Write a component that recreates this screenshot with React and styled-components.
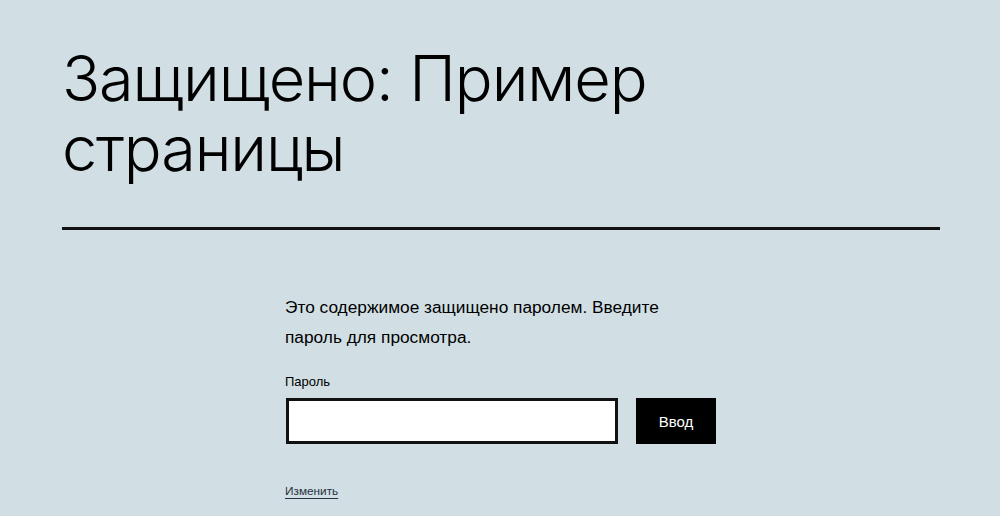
import React from "react";
import styled, { createGlobalStyle } from "styled-components";

const Global = createGlobalStyle`
  html, body { margin: 0; padding: 0; background: #d1dfe4; }
  body { font-family: "Liberation Sans", Arial, sans-serif; color: #000; }
`;

const Page = styled.div`
  width: 1000px;
  height: 516px;
  overflow: hidden;
  background: #d1dfe4;
`;

const Header = styled.header`
  margin: 0 60px 0 62px;
  padding: 43px 0 44px;
  border-bottom: 3px solid #111;
`;

const Title = styled.h1`
  margin: 0;
  font-family: Inter, "Liberation Sans", sans-serif;
  font-weight: 300;
  font-size: 63px;
  line-height: 70px;
  letter-spacing: -1.1px;
  max-width: 700px;
`;

const Content = styled.main`
  width: 430px;
  margin: 63px auto 0 285px;
`;

const Text = styled.p`
  margin: 0;
  font-size: 17.3px;
  line-height: 29.5px;
`;

const Label = styled.label`
  display: block;
  margin-top: 20px;
  font-size: 13px;
  line-height: 20px;
`;

const Row = styled.div`
  display: flex;
  align-items: flex-start;
  gap: 18px;
  margin-top: 6px;
`;

const Input = styled.input`
  box-sizing: border-box;
  flex: none;
  width: 332px;
  height: 46px;
  margin: 0 0 0 1px;
  padding: 0;
  border: 3px solid #111;
  background: #fff;
  outline: none;
`;

const Button = styled.button`
  box-sizing: border-box;
  flex: none;
  width: 80px;
  height: 46px;
  margin: 0;
  padding: 0;
  border: none;
  background: #000;
  color: #fff;
  font-family: "Liberation Sans", Arial, sans-serif;
  font-size: 15px;
`;

const Link = styled.a`
  display: inline-block;
  margin-top: 40px;
  font-size: 11.8px;
  color: #28303d;
  text-decoration: underline;
  text-underline-offset: 3px;
`;

export default function App() {
  return (
    <Page>
      <Global />
      <Header>
        <Title>Защищено: Пример страницы</Title>
      </Header>
      <Content>
        <Text>Это содержимое защищено паролем. Введите пароль для просмотра.</Text>
        <Label htmlFor="pwbox">Пароль</Label>
        <Row>
          <Input id="pwbox" type="password" />
          <Button type="submit">Ввод</Button>
        </Row>
        <Link href="#">Изменить</Link>
      </Content>
    </Page>
  );
}
